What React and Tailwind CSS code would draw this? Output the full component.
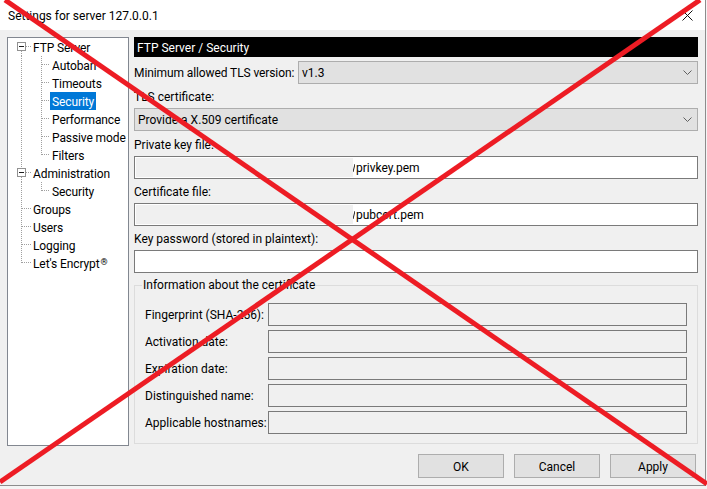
import React from "react";

const font = { fontFamily: 'Roboto, "Noto Sans", sans-serif' };

const rows = [
  { t: "FTP Server", lvl: 0, box: true, first: true },
  { t: "Autoban", lvl: 1 },
  { t: "Timeouts", lvl: 1 },
  { t: "Security", lvl: 1, sel: true },
  { t: "Performance", lvl: 1 },
  { t: "Passive mode", lvl: 1 },
  { t: "Filters", lvl: 1, last1: true },
  { t: "Administration", lvl: 0, box: true },
  { t: "Security", lvl: 1, last1: true },
  { t: "Groups", lvl: 0 },
  { t: "Users", lvl: 0 },
  { t: "Logging", lvl: 0 },
  { t: "Let's Encrypt", lvl: 0, last0: true, reg: true },
];

const dot = { stroke: "#a0a0a0", strokeWidth: 1, strokeDasharray: "1 1" };

function Gutter({ r }) {
  const w = r.lvl === 0 ? 23 : 42;
  return (
    <svg width={w} height="18" className="shrink-0" shapeRendering="crispEdges">
      {r.lvl === 0 && r.box && (
        <>
          {!r.first && <line x1="13.5" y1="0" x2="13.5" y2="4" {...dot} />}
          <line x1="13.5" y1="13" x2="13.5" y2="18" {...dot} />
          <line x1="18" y1="8.5" x2="23" y2="8.5" {...dot} />
          <rect x="9.5" y="4.5" width="8" height="8" fill="#fff" stroke="#919191" />
          <line x1="11" y1="8.5" x2="16" y2="8.5" stroke="#1e1e1e" />
        </>
      )}
      {r.lvl === 0 && !r.box && (
        <>
          <line x1="13.5" y1="0" x2="13.5" y2={r.last0 ? 9 : 18} {...dot} />
          <line x1="14" y1="8.5" x2="23" y2="8.5" {...dot} />
        </>
      )}
      {r.lvl === 1 && (
        <>
          <line x1="13.5" y1="0" x2="13.5" y2="18" {...dot} />
          <line x1="33.5" y1="0" x2="33.5" y2={r.last1 ? 9 : 18} {...dot} />
          <line x1="34" y1="8.5" x2="42" y2="8.5" {...dot} />
        </>
      )}
    </svg>
  );
}

function Chevron() {
  return (
    <svg width="9" height="6" viewBox="0 0 9 6" className="shrink-0">
      <polyline points="0.5,0.5 4.5,4.5 8.5,0.5" fill="none" stroke="#606060" strokeWidth="1" />
    </svg>
  );
}

function Combo({ text, className = "" }) {
  return (
    <div className={"flex h-[23px] items-center justify-between border border-[#adadad] bg-[#e1e1e1] pl-[3px] pr-[5px] " + className}>
      <span className="pt-[1px]">{text}</span>
      <Chevron />
    </div>
  );
}

function RedactedBox({ text }) {
  return (
    <div className="flex h-[23px] items-stretch border border-[#7a7a7a] bg-white p-[1px]">
      <div className="w-[217px] shrink-0 bg-[#f0f0f0]" />
      <div className="flex items-center gap-[1px] pt-[1px]">
        <svg width="2" height="10" className="shrink-0">
          <line x1="0" y1="9" x2="2" y2="1" stroke="#222" strokeWidth="1" />
        </svg>
        <span className="whitespace-nowrap">{text}</span>
      </div>
    </div>
  );
}

const infoRows = [
  "Fingerprint (SHA-256):",
  "Activation date:",
  "Expiration date:",
  "Distinguished name:",
  "Applicable hostnames:",
];

export default function App() {
  return (
    <div className="relative h-[489px] w-[707px] overflow-hidden bg-[#f4f4f4] text-[12px] leading-[16px] text-black" style={font}>
      <div className="flex h-[486px] w-[706px] flex-col border-b border-r border-[#8c8c8c] bg-[#f0f0f0]">
        {/* Title bar */}
        <div className="flex h-[30px] shrink-0 items-center justify-between bg-white pl-[8px] pr-[12px] pt-[1px]">
          <span>Settings for server 127.0.0.1</span>
          <svg width="11" height="11" viewBox="0 0 11 11">
            <line x1="0.5" y1="0.5" x2="10.5" y2="10.5" stroke="#111" strokeWidth="1" />
            <line x1="10.5" y1="0.5" x2="0.5" y2="10.5" stroke="#111" strokeWidth="1" />
          </svg>
        </div>

        {/* Body */}
        <div className="flex flex-1 flex-col pt-[7px]">
          <div className="flex h-[409px]">
            {/* Tree */}
            <div className="ml-[7px] w-[122px] shrink-0 border border-[#828790] bg-white">
              <div className="flex flex-col">
                {rows.map((r, i) => (
                  <div key={i} className="flex h-[18px] items-center">
                    <Gutter r={r} />
                    <span
                      className={
                        "flex h-[18px] items-center whitespace-nowrap px-[2px] pt-[1px] tracking-[-0.1px] " +
                        (r.sel ? "bg-[#0078d7] text-white" : "")
                      }
                    >
                      {r.t}
                      {r.reg && <span className="ml-[1px] self-start pt-[2px] text-[9px] leading-[10px]">®</span>}
                    </span>
                  </div>
                ))}
              </div>
            </div>

            {/* Right panel */}
            <div className="ml-[5px] flex w-[564px] flex-col">
              <div className="flex h-[20px] items-center bg-black pl-[3px] pt-[1px] text-white">FTP Server / Security</div>

              <div className="mt-[4px] flex items-center">
                <span className="w-[164px] shrink-0 whitespace-nowrap pt-[1px] tracking-[-0.1px]">Minimum allowed TLS version:</span>
                <Combo text="v1.3" className="flex-1" />
              </div>

              <div className="mt-[5px] h-[15px]">TLS certificate:</div>
              <Combo text="Provide a X.509 certificate" className="mt-[4px]" />

              <div className="mt-[6px] h-[15px]">Private key file:</div>
              <div className="mt-[4px]">
                <RedactedBox text="privkey.pem" />
              </div>

              <div className="mt-[5px] h-[15px]">Certificate file:</div>
              <div className="mt-[4px]">
                <RedactedBox text="pubcert.pem" />
              </div>

              <div className="mt-[5px] h-[15px]">Key password (stored in plaintext):</div>
              <div className="mt-[4px] h-[23px] border border-[#7a7a7a] bg-white" />

              <fieldset className="mt-[4px] border border-[#dcdcdc] px-[10px] pb-[9px]">
                <legend className="-ml-[3px] px-[1px]">Information about the certificate</legend>
                <div className="mt-[10px] flex flex-col gap-[4px]">
                  {infoRows.map((l) => (
                    <div key={l} className="flex items-center">
                      <span className="w-[123px] shrink-0 whitespace-nowrap pt-[1px]">{l}</span>
                      <div className="h-[23px] flex-1 border border-[#7a7a7a] bg-[#f0f0f0]" />
                    </div>
                  ))}
                </div>
              </fieldset>
            </div>
          </div>

          {/* Buttons */}
          <div className="mt-[8px] flex justify-end gap-[10px] pr-[9px]">
            {["OK", "Cancel", "Apply"].map((b) => (
              <button
                key={b}
                className="flex h-[24px] w-[86px] items-center justify-center border border-[#adadad] bg-[#e1e1e1] pt-[1px]"
              >
                {b}
              </button>
            ))}
          </div>
        </div>
      </div>

      {/* Red X overlay */}
      <svg className="pointer-events-none absolute inset-0" width="707" height="489" viewBox="0 0 707 489">
        <line x1="5" y1="0" x2="707" y2="484" stroke="#ed1c24" strokeWidth="5" />
        <line x1="700" y1="0" x2="0" y2="482" stroke="#ed1c24" strokeWidth="5" />
      </svg>
    </div>
  );
}
